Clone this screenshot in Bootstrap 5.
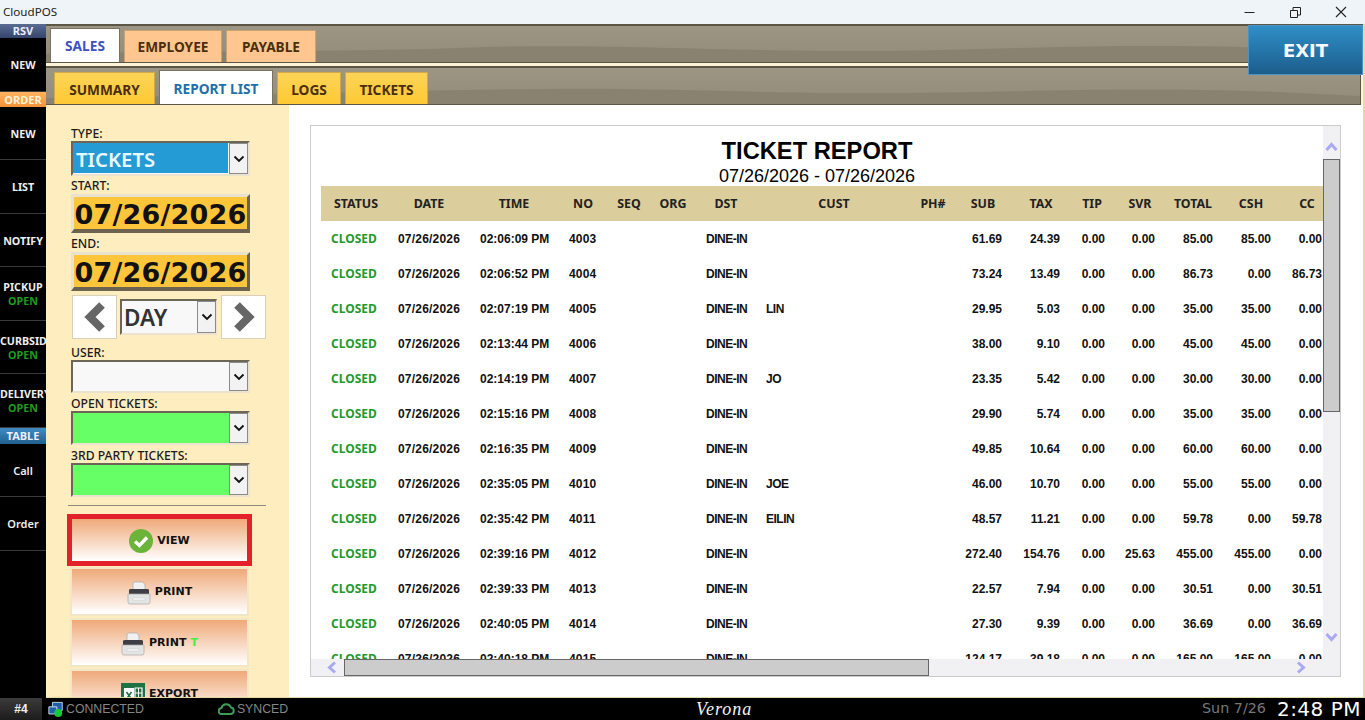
<!DOCTYPE html>
<html lang="en">
<head>
  <meta charset="UTF-8">
  <title>CloudPOS</title>
  <link href="https://cdn.jsdelivr.net/npm/bootstrap@5.3.0/dist/css/bootstrap.min.css" rel="stylesheet">
  <style>
    html, body { height: 720px; overflow: hidden; }
    body { background: #000; font-family: "Noto Sans", "Liberation Sans", sans-serif; font-size: 12px; }

    .win-bar { height: 24px; background: #eff4f9; color: #222; font-size: 11.6px; padding: 0 1px 0 3px; }
    .win-btn { width: 46px; height: 24px; }

    .app-row { height: 674px; }
    .side-col { width: 46px; background: #000; color: #eee; font-weight: 700; font-size: 10.7px; text-align: center; }
    .side-head { height: 15px; line-height: 15px; font-size: 11px; color: #eef; }
    .head-rsv { height: 14px; line-height: 14px; background: linear-gradient(#5a6c92, #34466c); }
    .head-order { background: linear-gradient(#ffb35e, #f2913a); color: #fff2d8; }
    .head-table { height: 16px; line-height: 16px; background: linear-gradient(#3f8cc4, #20608f); }
    .side-item { height: 53.5px; padding-top: 2px; border-bottom: 1px solid #3a3a3a; white-space: nowrap; overflow: hidden; display: flex; flex-direction: column; justify-content: center; line-height: 14px; }
    .side-item span { display: block; }
    .side-open { color: #1f9a1f; }
    .side-plain { font-weight: 600; font-size: 11px; }

    .main-col { background: #fff; border-right: 2px solid #e6d9a8; border-bottom: 1px solid #e6d9a8; }
    .band { position: relative; border: 1px solid #5c5646; background: linear-gradient(#9d9685, #938b79); }
    .band-top { height: 39px; border-width: 2px 0 1px 0; padding: 3px 0 0 4px; }
    .band-sub { height: 39px; margin-top: 3px; margin-right: 2px; border-width: 2px 1px 1px 0; padding: 4px 0 0 8px; }
    .strip-gap { background: #fdf3d6; }
    .band-wave { position: absolute; left: 0; top: 0; width: 100%; height: 100%; }

    .tab-row { position: relative; flex-wrap: nowrap; gap: 4px; align-items: flex-end; height: 100%; }
    .tab-row .nav-link { border-radius: 0; padding: 0; font-weight: 700; font-size: 13.7px; text-align: center; line-height: 33px; height: 32px; color: #4b2e0c; }
    .tab-peach { background: #ffc690; border: 1px solid #c9a272; border-width: 1px 1px 0 1px; }
    .tab-gold { background: linear-gradient(#fbd456, #ffc935); border: 1px solid #d2a94a; border-width: 1px 1px 0 1px; }
    .tab-row .nav-link.tab-on { background: #fff; height: 34px; line-height: 35px; border: 1px solid #7a7360; border-bottom: 0; }
    .band-top .tab-row .nav-link { line-height: 31px; }
    .band-top .tab-row .nav-link.tab-on { line-height: 33px; }
    .tab-sales { color: #3f51c0 !important; }
    .tab-report { color: #1f6fa8 !important; }

    .exit-btn { position: absolute; left: 1248px; top: 25px; width: 115px; height: 50px; border-radius: 0; border: 1px solid #4b93c4; background: linear-gradient(#2f8fc6, #1c5d8c); color: #f4faff; font-family: "DejaVu Sans", sans-serif; font-weight: 700; font-size: 18px; z-index: 5; padding: 1px 0 0; }

    .work-row { min-height: 0; }
    .filter-col { width: 243px; background: #fdedbf; overflow: hidden; padding: 18px 0 0 25px; color: #1a1a1a; }
    .filter-col > * { flex-shrink: 0; }
    .fld-label { height: 14px; line-height: 16px; font-size: 12.2px; margin-top: 3px; font-weight: 500; }
    .fld-tight { margin-top: 2px; }
    .fld-user { margin-top: 6px; }
    .pick-box { width: 179px; display: flex; margin-top: 1px; border-style: solid; border-width: 2px; border-color: #6c6656 #ebe3cd #ebe3cd #6c6656; background: #f8f8f8; }
    .pick-h35 { height: 35px; }
    .pick-h33 { height: 33px; }
    .pick-h34 { height: 34px; }
    .pick-val { flex: 1; min-width: 0; }
    .pick-blue { background: #259bd6; color: #eaf8ff; font-size: 20.3px; font-weight: 600; line-height: 32px; padding-left: 3px; margin: 0 1px 1px 0; overflow: hidden; }
    .pick-green { background: #66ff66; }
    .pick-arrow { width: 19px; background: #f2f2f2; border: 1px solid #8a8a8a; display: flex; align-items: center; justify-content: center; }
    .date-box { width: 179px; height: 39px; margin-top: 2px; background: #fdc53a; border-style: solid; border-width: 3px 3px 4px 3px; border-color: #e9e2cf #6b6350 #6b6350 #e9e2cf; font-family: "DejaVu Sans", sans-serif; font-weight: 700; font-size: 27px; letter-spacing: .2px; line-height: 35px; color: #111; text-align: center; white-space: nowrap; overflow: hidden; }
    .nav-row { width: 194px; margin: 4px 0 0 1px; height: 44px; }
    .step-btn { width: 45px; height: 44px; border-radius: 0; padding: 0; background: #fff; border: 1px solid #d8d0b8; }
    .day-pick { width: 97px; height: 36px; margin: 0 4px 0 3px; border-width: 2px 1px 2px 2px; }
    .day-val { font-size: 22.5px; font-weight: 600; color: #333; line-height: 34px; padding-left: 2px; overflow: hidden; }
    .day-pick .pick-arrow { width: 19px; }
    .filter-rule { width: 198px; margin: 8px 0 8px -3px; border-color: #8f8a7c; opacity: 1; }
    .act-btn { display: flex; align-items: center; justify-content: center; gap: 4px; width: 179px; height: 49px; margin: 0 0 2px -1px; padding: 2px 0 0; border-radius: 0; border: 2px solid #f3e6c6; background: linear-gradient(#efa979, #fff); color: #111; font-family: "DejaVu Sans", sans-serif; font-weight: 700; font-size: 11px; flex-shrink: 0; }
    .act-view { width: 185px; height: 52px; margin: 0 0 1px -4px; border: 5px solid #e3212b; }
    .txt-t { color: #44ee44; }

    .report-pane { padding: 20px 22px 20px 21px; min-width: 0; background: #fff; }
    .report-box { position: relative; height: 100%; border: 1px solid #ccc; overflow: hidden; padding-left: 10px; background: #fff; }
    .rep-title { width: 992px; text-align: center; font-family: "Liberation Sans", sans-serif; color: #000; }
    .rep-name { font-weight: 700; font-size: 23.7px; line-height: 28px; padding-top: 11px; }
    .rep-range { font-size: 18px; height: 21px; line-height: 23px; }
    .rep-table { table-layout: fixed; width: 1008px; margin: 0; font-family: "Liberation Sans", sans-serif; }
    .rep-table > :not(caption) > * > * { padding: 0; border: 0; box-shadow: none; background: transparent; color: #111; }
    .rep-table thead tr { height: 35px; background: #dccd9c; }
    .rep-table > thead > tr > th { text-align: center; vertical-align: middle; padding-top: 1px; font-family: "Noto Sans", sans-serif; font-size: 12.4px; font-weight: 700; color: #222; }
    .rep-table tbody tr { height: 35px; }
    .rep-table tbody td { vertical-align: middle; font-size: 12px; font-weight: 700; white-space: nowrap; }
    .rep-table > tbody > tr > td.rep-status { color: #1f9a2e; font-size: 12px; font-family: "Noto Sans", sans-serif; }
    .rep-table tbody td.rep-narrow { letter-spacing: -.5px; }
    .rep-table tbody td.rep-wide { letter-spacing: .2px; }
    .rep-table tbody td.rep-num { text-align: right; }

    .v-track { position: absolute; right: 0; top: 0; width: 17px; height: 533px; background: #f1f1f3; }
    .v-thumb { position: absolute; left: 0; top: 33px; width: 17px; height: 253px; background: #ccc; border: 1px solid #666; }
    .h-track { position: absolute; left: 0; bottom: 0; width: 100%; height: 17px; background: #f1f1f3; }
    .h-thumb { position: absolute; left: 33px; top: 0; width: 585px; height: 17px; background: #ccc; border: 1px solid #666; }
    .sb-arrow { position: absolute; }

    .status-bar { height: 22px; background: #000; color: #858585; font-family: "Liberation Sans", sans-serif; font-size: 12.3px; }
    .seat-tag { width: 42px; height: 22px; line-height: 22px; text-align: center; background: linear-gradient(#3b3b3b, #1c1c1c); color: #eee; font-weight: 700; font-size: 12px; }
    .venue-name { width: 60px; text-align: center; color: #f4f4f4; font-family: "Liberation Serif", serif; font-style: italic; font-size: 18px; letter-spacing: 1px; }
    .clock-date { font-family: "DejaVu Sans", sans-serif; font-size: 14.3px; color: #777; }
    .clock-time { font-family: "DejaVu Sans", sans-serif; font-size: 20px; color: #fff; letter-spacing: .5px; line-height: 22px; }
  </style>
</head>
<body>
  <svg width="0" height="0" class="position-absolute">
    <symbol id="chev" viewBox="0 0 12 8"><path d="M1.5 1.5 6 6l4.5-4.5" fill="none" stroke="#111" stroke-width="1.8"/></symbol>
    <symbol id="printer" viewBox="0 0 24 24">
      <path d="M7 1h9l2 3v6H6V3z" fill="#f1f1f1" stroke="#aaa" stroke-width=".7"/>
      <path d="M2 9q0-1 2-1h16q2 0 2 1v4H2z" fill="#3d3f44"/>
      <path d="M1 13h22v8q0 2-2 2H3q-2 0-2-2z" fill="#e3e5e5" stroke="#a8a8a8" stroke-width=".7"/>
      <path d="M6 17h12v2H6z" fill="#fafafa" stroke="#bbb" stroke-width=".4"/>
    </symbol>
  </svg>

  <div class="win-bar d-flex align-items-center">
    <span class="flex-grow-1">CloudPOS</span>
    <span class="win-btn d-flex align-items-center justify-content-center">
      <svg width="11" height="11"><path d="M0.5 5.5h10" stroke="#222"/></svg>
    </span>
    <span class="win-btn d-flex align-items-center justify-content-center">
      <svg width="11" height="11"><path d="M.5 3.500h7v7h-7zM3 3.500V.5h7.500V8H7.500" fill="none" stroke="#222"/></svg>
    </span>
    <span class="win-btn d-flex align-items-center justify-content-center">
      <svg width="12" height="12"><path d="M1 1l10 10M11 1 1 11" stroke="#222" stroke-width="1.1"/></svg>
    </span>
  </div>

  <div class="app-row d-flex">
    <div class="side-col flex-shrink-0">
      <div class="side-head head-rsv">RSV</div>
      <div class="side-item">NEW</div>
      <div class="side-head head-order">ORDER</div>
      <div class="side-item">NEW</div>
      <div class="side-item">LIST</div>
      <div class="side-item">NOTIFY</div>
      <div class="side-item"><span>PICKUP</span><span class="side-open">OPEN</span></div>
      <div class="side-item"><span>CURBSIDE</span><span class="side-open">OPEN</span></div>
      <div class="side-item"><span>DELIVERY</span><span class="side-open">OPEN</span></div>
      <div class="side-head head-table">TABLE</div>
      <div class="side-item side-plain">Call</div>
      <div class="side-item side-plain">Order</div>
    </div>

    <div class="main-col flex-grow-1 d-flex flex-column">
      <div class="strip-gap">
        <div class="band band-top">
          <svg class="band-wave" viewBox="0 0 1320 36" preserveAspectRatio="none"><path d="M0 28C120 24 300 27 440 21 560 18 660 24 780 25 920 26 1000 19 1120 20 1200 20 1280 24 1320 25V36H0z" fill="#8a8270"/></svg>
          <ul class="nav tab-row">
            <li class="nav-item"><a class="nav-link tab-on tab-sales" style="width:70px" href="#">SALES</a></li>
            <li class="nav-item"><a class="nav-link tab-peach" style="width:98px" href="#">EMPLOYEE</a></li>
            <li class="nav-item"><a class="nav-link tab-peach" style="width:90px" href="#">PAYABLE</a></li>
          </ul>
        </div>
        <div class="band band-sub">
          <svg class="band-wave" viewBox="0 0 1320 36" preserveAspectRatio="none"><path d="M0 30C200 28 360 22 500 21 620 20 700 25 820 25 960 25 1040 20 1160 22 1240 23 1290 27 1320 28V36H0z" fill="#8a8270"/></svg>
          <ul class="nav tab-row">
            <li class="nav-item"><a class="nav-link tab-gold" style="width:101px" href="#">SUMMARY</a></li>
            <li class="nav-item"><a class="nav-link tab-on tab-report" style="width:114px" href="#">REPORT LIST</a></li>
            <li class="nav-item"><a class="nav-link tab-gold" style="width:64px" href="#">LOGS</a></li>
            <li class="nav-item"><a class="nav-link tab-gold" style="width:83px" href="#">TICKETS</a></li>
          </ul>
        </div>
      </div>

      <div class="work-row d-flex flex-grow-1">
        <div class="filter-col flex-shrink-0 d-flex flex-column">
          <div class="fld-label">TYPE:</div>
          <div class="pick-box pick-h35">
            <div class="pick-val pick-blue">TICKETS</div>
            <div class="pick-arrow"><svg width="12" height="8"><use href="#chev"/></svg></div>
          </div>
          <div class="fld-label fld-tight">START:</div>
          <div class="date-box">07/26/2026</div>
          <div class="fld-label">END:</div>
          <div class="date-box">07/26/2026</div>
          <div class="nav-row d-flex align-items-center">
            <button class="btn step-btn d-flex align-items-center justify-content-center" type="button">
              <svg width="24" height="32" viewBox="0 0 24 32"><path d="M19 4 7 16l12 12" fill="none" stroke="#666" stroke-width="8"/></svg>
            </button>
            <div class="pick-box day-pick">
              <div class="pick-val day-val">DAY</div>
              <div class="pick-arrow"><svg width="12" height="8"><use href="#chev"/></svg></div>
            </div>
            <button class="btn step-btn d-flex align-items-center justify-content-center" type="button">
              <svg width="24" height="32" viewBox="0 0 24 32"><path d="M5 4l12 12L5 28" fill="none" stroke="#666" stroke-width="8"/></svg>
            </button>
          </div>
          <div class="fld-label fld-user">USER:</div>
          <div class="pick-box pick-h33">
            <div class="pick-val"></div>
            <div class="pick-arrow"><svg width="12" height="8"><use href="#chev"/></svg></div>
          </div>
          <div class="fld-label">OPEN TICKETS:</div>
          <div class="pick-box pick-h34">
            <div class="pick-val pick-green"></div>
            <div class="pick-arrow"><svg width="12" height="8"><use href="#chev"/></svg></div>
          </div>
          <div class="fld-label">3RD PARTY TICKETS:</div>
          <div class="pick-box pick-h34">
            <div class="pick-val pick-green"></div>
            <div class="pick-arrow"><svg width="12" height="8"><use href="#chev"/></svg></div>
          </div>
          <hr class="filter-rule">
          <button class="btn act-btn act-view" type="button">
            <svg width="24" height="24" viewBox="0 0 24 24"><circle cx="12" cy="12" r="12" fill="#6cb33a"/><path d="M6 12.500l4.500 4L18 8.500" fill="none" stroke="#fff" stroke-width="3.400"/></svg>
            VIEW
          </button>
          <button class="btn act-btn" type="button">
            <svg width="24" height="24"><use href="#printer"/></svg> PRINT
          </button>
          <button class="btn act-btn" type="button">
            <svg width="24" height="24"><use href="#printer"/></svg> PRINT <span class="txt-t">T</span>
          </button>
          <button class="btn act-btn" type="button">
            <svg width="24" height="24" viewBox="0 0 24 24"><path d="M0 0h24v24H0z" fill="#1f7244"/><path d="M3 5h10v15H3z" fill="#fff"/><path d="M14 5h7v15h-7z" fill="none" stroke="#fff" stroke-width="1.200"/><path d="M14 10h7M14 15h7M17.500 5v15" stroke="#fff" stroke-width="1"/><path d="M5.500 9l5 7M10.500 9l-5 7" stroke="#1f7244" stroke-width="1.600"/></svg>
            EXPORT
          </button>
        </div>

        <div class="report-pane flex-grow-1">
          <div class="report-box">
            <div class="rep-title">
              <div class="rep-name">TICKET REPORT</div>
              <div class="rep-range">07/26/2026 - 07/26/2026</div>
            </div>
            <table class="table rep-table" id="repTable">
              <thead><tr></tr></thead>
              <tbody></tbody>
            </table>
            <div class="v-track">
              <svg class="sb-arrow" style="left:2px;top:16px" width="13" height="10" viewBox="0 0 13 10"><path d="M1.500 8 6.500 2.500l5 5.500" fill="none" stroke="#a9a9f2" stroke-width="3"/></svg>
              <div class="v-thumb"></div>
              <svg class="sb-arrow" style="left:2px;top:506px" width="13" height="10" viewBox="0 0 13 10"><path d="M1.500 2l5 5.500 5-5.500" fill="none" stroke="#a9a9f2" stroke-width="3"/></svg>
            </div>
            <div class="h-track">
              <svg class="sb-arrow" style="left:16px;top:2px" width="10" height="13" viewBox="0 0 10 13"><path d="M8 1.500 2.500 6.500l5.500 5" fill="none" stroke="#a9a9f2" stroke-width="3"/></svg>
              <div class="h-thumb"></div>
              <svg class="sb-arrow" style="left:985px;top:2px" width="10" height="13" viewBox="0 0 10 13"><path d="M2 1.500l5.500 5-5.500 5" fill="none" stroke="#a9a9f2" stroke-width="3"/></svg>
            </div>
          </div>
        </div>
      </div>
    </div>
  </div>

  <button class="btn exit-btn" type="button">EXIT</button>

  <div class="status-bar d-flex align-items-center">
    <div class="seat-tag">#4</div>
    <svg style="margin-left:6px" width="16" height="17" viewBox="0 0 18 18"><path d="M5 1h11v9H5z" fill="#1d5fa8" stroke="#cfe3f6"/><path d="M1 6h9v8H1z" fill="#1d5fa8" stroke="#dcebf8"/><circle cx="11.500" cy="13" r="4.500" fill="#19c93a"/></svg>
    <span style="margin-left:2px">CONNECTED</span>
    <svg style="margin-left:74px" width="17" height="12" viewBox="0 0 17 12"><path d="M4 11a3 3 0 0 1-.5-6A5 5 0 0 1 13 4.500a3.300 3.300 0 0 1 0 6.500z" fill="none" stroke="#3f9a57" stroke-width="2"/></svg>
    <span style="margin-left:2px">SYNCED</span>
    <span class="venue-name" style="margin-left:406px">Verona</span>
    <span class="clock-date ms-auto">Sun 7/26</span>
    <span class="clock-time" style="margin:0 4px 0 11px">2:48 PM</span>
  </div>

<script>
  // label, column width, cell padding side and size, extra cell class
  const cols = [
    ['STATUS', 70, 'l', 10, 'rep-status'], ['DATE', 76, 'l', 7, 'rep-wide'], ['TIME', 94, 'l', 13], ['NO', 44, 'l', 8, 'rep-wide'],
    ['SEQ', 48], ['ORG', 40], ['DST', 66, 'l', 13, 'rep-narrow'], ['CUST', 150, 'l', 7, 'rep-narrow'], ['PH#', 48],
    ['SUB', 52, 'r', 7], ['TAX', 64, 'r', 13], ['TIP', 38, 'r', 6], ['SVR', 58, 'r', 14],
    ['TOTAL', 48, 'r', 4], ['CSH', 68, 'r', 14], ['CC', 44, 'r', 7]
  ];
  const rows = [
    ['02:06:09 PM', 4003, '', '61.69', '24.39', '0.00', '85.00', '85.00', '0.00'],
    ['02:06:52 PM', 4004, '', '73.24', '13.49', '0.00', '86.73', '0.00', '86.73'],
    ['02:07:19 PM', 4005, 'LIN', '29.95', '5.03', '0.00', '35.00', '35.00', '0.00'],
    ['02:13:44 PM', 4006, '', '38.00', '9.10', '0.00', '45.00', '45.00', '0.00'],
    ['02:14:19 PM', 4007, 'JO', '23.35', '5.42', '0.00', '30.00', '30.00', '0.00'],
    ['02:15:16 PM', 4008, '', '29.90', '5.74', '0.00', '35.00', '35.00', '0.00'],
    ['02:16:35 PM', 4009, '', '49.85', '10.64', '0.00', '60.00', '60.00', '0.00'],
    ['02:35:05 PM', 4010, 'JOE', '46.00', '10.70', '0.00', '55.00', '55.00', '0.00'],
    ['02:35:42 PM', 4011, 'EILIN', '48.57', '11.21', '0.00', '59.78', '0.00', '59.78'],
    ['02:39:16 PM', 4012, '', '272.40', '154.76', '25.63', '455.00', '455.00', '0.00'],
    ['02:39:33 PM', 4013, '', '22.57', '7.94', '0.00', '30.51', '0.00', '30.51'],
    ['02:40:05 PM', 4014, '', '27.30', '9.39', '0.00', '36.69', '0.00', '36.69'],
    ['02:40:18 PM', 4015, '', '124.17', '39.18', '0.00', '165.00', '165.00', '0.00']
  ];

  const table = document.getElementById('repTable');
  table.querySelector('thead tr').innerHTML = cols.map(c => `<th style="width:${c[1]}px">${c[0]}</th>`).join('');
  table.querySelector('tbody').innerHTML = rows.map(r => {
    const vals = ['CLOSED', '07/26/2026', r[0], r[1], '', '', 'DINE-IN', r[2], '', r[3], r[4], '0.00', r[5], r[6], r[7], r[8]];
    return '<tr>' + vals.map((v, i) => {
      const c = cols[i];
      const pad = c[2] === 'l' ? `padding-left:${c[3]}px` : c[2] === 'r' ? `padding-right:${c[3]}px` : '';
      const cls = [c[4] || '', c[2] === 'r' ? 'rep-num' : ''].join(' ');
      return `<td class="${cls}" style="${pad}">${v}</td>`;
    }).join('') + '</tr>';
  }).join('');
</script>
<script src="https://cdn.jsdelivr.net/npm/bootstrap@5.3.0/dist/js/bootstrap.bundle.min.js"></script>
</body>
</html>
